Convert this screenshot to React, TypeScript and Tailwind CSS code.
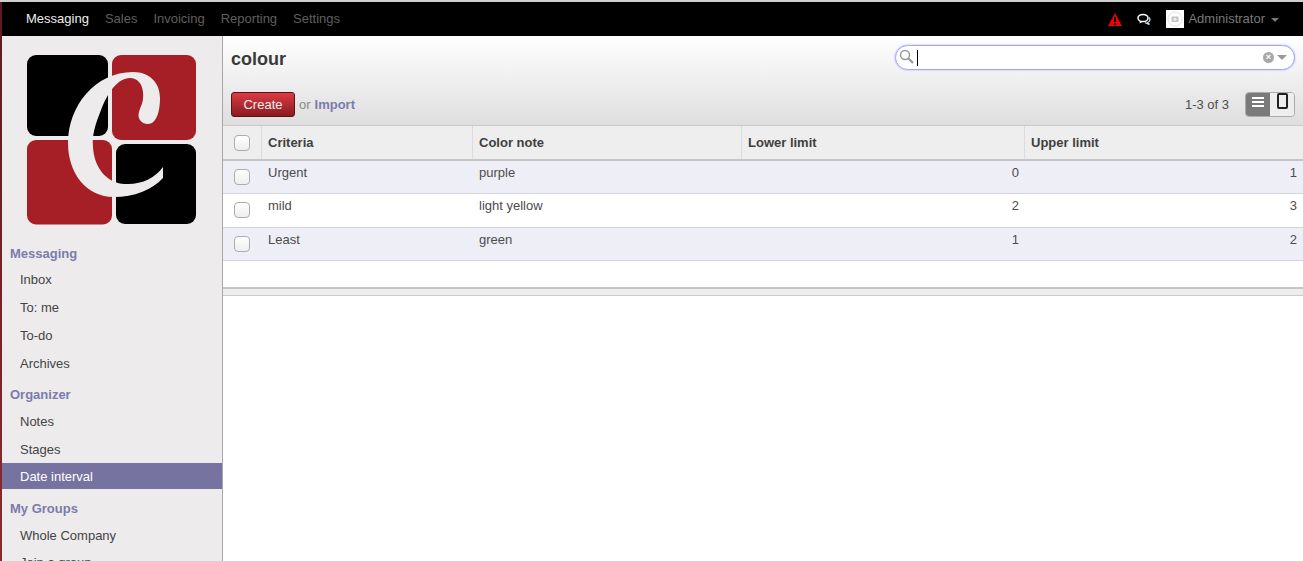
const navItems = ["Messaging", "Sales", "Invoicing", "Reporting", "Settings"];

const rows = [
  { name: "Urgent", color: "purple", low: 0, high: 1, even: true },
  { name: "mild", color: "light yellow", low: 2, high: 3, even: false },
  { name: "Least", color: "green", low: 1, high: 2, even: true },
];

function Logo() {
  return (
    <svg width="170" height="170" viewBox="27 55 170 170">
      <rect x="27" y="55" width="81" height="81" rx="9" fill="#000" />
      <rect x="112" y="55" width="84" height="85" rx="9" fill="#a61e26" />
      <rect x="27" y="140" width="85" height="84.500" rx="9" fill="#a61e26" />
      <rect x="116" y="144" width="80" height="80" rx="9" fill="#000" />
      <path
        d="M148 124 C141 124 137 118 139 112 C141 105 144 102 143 92 C142 83 137 78 130 78 C118 78 108 92 101 110 C95 125 92 135 93 147 C94 166 105 183 125 184 C141 185 155 178 163 167 L163 178 C152 190 134 197 114 197 C86 197 68 173 68 143 C68 106 95 72 133 72 C150 72 160 83 160 98 C160 112 156 124 148 124 Z"
        fill="#edebec"
      />
    </svg>
  );
}

function Checkbox() {
  return <span className="block h-[16px] w-[16px] rounded-[4px] border border-[#adadad] bg-gradient-to-b from-white to-[#eeeeee]" />;
}

function SideHeader({ label }: { label: string }) {
  return <div className="flex h-[26px] items-center pl-[8px] text-[13px] font-bold text-[#7c7bad]">{label}</div>;
}

function SideItem({ label, active, short }: { label: string; active?: boolean; short?: boolean }) {
  return (
    <div className={`flex items-center pl-[18px] text-[13px] ${active ? "h-[26px] bg-[#7673a1] pt-[1px] text-white" : short ? "h-[27px] text-[#444444]" : "h-[28px] text-[#444444]"}`}>
      {label}
    </div>
  );
}

export default function App() {
  return (
    <div className="flex h-[561px] w-[1303px] flex-col overflow-hidden bg-white font-['Liberation_Sans',Arial,sans-serif] text-[13px] text-[#4c4c4c]">
      <div className="h-[2px] shrink-0 bg-[#cfcfcf]" />
      <div className="flex min-h-0 flex-1">
        <div className="w-[2px] shrink-0 bg-gradient-to-b from-[#5e1a22] to-[#8a2a30]" />
        <div className="flex min-w-0 flex-1 flex-col">
          {/* top bar */}
          <header className="flex h-[34px] shrink-0 items-center justify-between bg-black pl-[24px] pr-[24px]">
            <nav className="flex gap-[16px]">
              {navItems.map((n, i) => (
                <span key={n} className={i === 0 ? "text-[#eeeeee]" : "text-[#5f5f5f]"}>
                  {n}
                </span>
              ))}
            </nav>
            <div className="flex items-center">
              <svg width="14" height="13" viewBox="0 0 14 13" className="mr-[15px]">
                <path d="M7 0 L14 13 L0 13 Z" fill="#ee0000" />
                <rect x="6" y="4" width="2" height="5" fill="#000" />
                <rect x="6" y="10" width="2" height="2" fill="#000" />
              </svg>
              <svg width="14" height="12" viewBox="0 0 14 12" className="mr-[15px]" fill="none">
                <ellipse cx="6" cy="5" rx="5" ry="3.600" stroke="#fff" strokeWidth="1.500" />
                <path d="M3 8 L2.500 10.500 L6 8.500" fill="#fff" />
                <path d="M12 4.500 C13.800 6.500 13 8.500 10.500 9.500 L12.500 11.500 L8 9.800" stroke="#cfe3f5" strokeWidth="1.200" />
              </svg>
              <span className="mr-[4px] flex h-[18px] w-[18px] items-center justify-center bg-white">
                <svg width="16" height="16" viewBox="0 0 16 16" fill="none">
                  <circle cx="8" cy="8" r="7" stroke="#e2e2e2" strokeWidth="1" />
                  <rect x="4.500" y="5.500" width="7" height="5.500" fill="#c4c4c4" />
                  <circle cx="8" cy="8.200" r="1.500" fill="#eeeeee" />
                </svg>
              </span>
              <span className="text-[#7a7a7a]">Administrator</span>
              <span className="ml-[6px] mt-[1px] h-0 w-0 border-x-[4px] border-t-[4px] border-x-transparent border-t-[#777777]" />
            </div>
          </header>

          <div className="flex min-h-0 flex-1">
            {/* sidebar */}
            <aside className="w-[221px] shrink-0 overflow-hidden border-r border-r-[#a8a8a8] bg-[#edebec]">
              <div className="flex h-[205px] items-start pl-[25px] pt-[19px]">
                <Logo />
              </div>
              <div className="h-[25px] overflow-hidden">
                <SideHeader label="Messaging" />
              </div>
              <SideItem label="Inbox" />
              <SideItem label="To: me" />
              <SideItem label="To-do" />
              <SideItem label="Archives" />
              <div className="mt-[4px]">
                <SideHeader label="Organizer" />
              </div>
              <SideItem label="Notes" />
              <SideItem label="Stages" short />
              <SideItem label="Date interval" active />
              <div className="mt-[7px]">
                <SideHeader label="My Groups" />
              </div>
              <SideItem label="Whole Company" short />
              <SideItem label="Join a group" />
            </aside>

            {/* main */}
            <main className="min-w-0 flex-1">
              <div className="h-[90px] border-b border-[#cacaca] bg-gradient-to-b from-white to-[#dedede] pl-[8px] pr-[8px]">
                <div className="flex h-[48px] items-start justify-between">
                  <h1 className="pt-[12px] text-[18px] font-bold leading-[22px] text-[#3a3a3a]">colour</h1>
                  <div className="relative mt-[9px] flex h-[25px] w-[400px] items-center rounded-[13px] border border-[#a6a6fe] bg-white pl-[3px] shadow-[0_0_2px_#a6a6fe]">
                    <svg width="15" height="15" viewBox="0 0 15 15" fill="none" stroke="#999999" className="-mt-[3px]">
                      <circle cx="6" cy="6" r="4.500" strokeWidth="1.500" />
                      <path d="M9.500 9.500 L14 14" strokeWidth="2.200" />
                    </svg>
                    <span className="ml-[3px] h-[16px] w-px bg-black" />
                    <span className="ml-auto flex h-[11px] w-[11px] items-center justify-center rounded-full bg-[#a8a8a8] text-[9px] font-bold leading-none text-white">×</span>
                    <span className="ml-[3px] mr-[7px] h-0 w-0 border-x-[5px] border-t-[5px] border-x-transparent border-t-[#9a9a9a]" />
                  </div>
                </div>
                <div className="mt-[8px] flex items-center justify-between">
                  <div className="flex items-center">
                    <button className="h-[25px] w-[64px] rounded-[3px] border border-[#5e1218] bg-gradient-to-b from-[#dc3c44] to-[#8b1a20] text-[13px] text-[#eeeeee]">
                      Create
                    </button>
                    <span className="ml-[4px] text-[#8a8a8a]">or</span>
                    <span className="ml-[4px] font-bold text-[#7c7bad]">Import</span>
                  </div>
                  <div className="flex items-center">
                    <span className="mr-[16px] text-[#4c4c4c]">1-3 of 3</span>
                    <div className="flex h-[25px] w-[50px] overflow-hidden rounded-[4px] border border-[#ababab]">
                      <span className="flex w-[24px] flex-col items-center gap-[2px] bg-[#7a7a7a] pt-[4px]">
                        <span className="h-[2px] w-[12px] bg-white" />
                        <span className="h-[2px] w-[12px] bg-white" />
                        <span className="h-[2px] w-[12px] bg-white" />
                      </span>
                      <span className="flex flex-1 justify-center bg-[#eeeeee]">
                        <span className="h-[16px] w-[11px] rounded-[2px] border-2 border-[#222222]" />
                      </span>
                    </div>
                  </div>
                </div>
              </div>

              {/* list */}
              <div className="grid grid-cols-[39px_211px_269px_283px_278px] border-b-2 border-b-[#c5c5c5] text-[13px]">
                <div className="flex h-[33px] items-center justify-start border-r border-[#dcdcdc] bg-[#eeeeee] pl-[11px]">
                  <Checkbox />
                </div>
                {["Criteria", "Color note", "Lower limit", "Upper limit"].map((h) => (
                  <div key={h} className="flex h-[33px] items-center border-r border-[#dcdcdc] bg-[#eeeeee] pl-[6px] font-bold text-[#3f3f3f] last:border-r-0">
                    {h}
                  </div>
                ))}
              </div>
              {rows.map((r) => (
                <div key={r.name} className={`grid h-[33.330px] grid-cols-[39px_211px_269px_283px_278px] border-b border-[#d5d5dd] ${r.even ? "bg-[#eeeef6]" : "bg-white"}`}>
                  <div className="pl-[11px] pt-[8px]">
                    <Checkbox />
                  </div>
                  <div className="pl-[6px] pt-[2px]">{r.name}</div>
                  <div className="pl-[6px] pt-[2px]">{r.color}</div>
                  <div className="pr-[6px] pt-[2px] text-right">{r.low}</div>
                  <div className="pr-[6px] pt-[2px] text-right">{r.high}</div>
                </div>
              ))}
              <div className="mt-[26px] h-[9px] border-t-2 border-b border-t-[#c5c5c5] border-b-[#cccccc] bg-[#eeeeee]" />
            </main>
          </div>
        </div>
      </div>
    </div>
  );
}
